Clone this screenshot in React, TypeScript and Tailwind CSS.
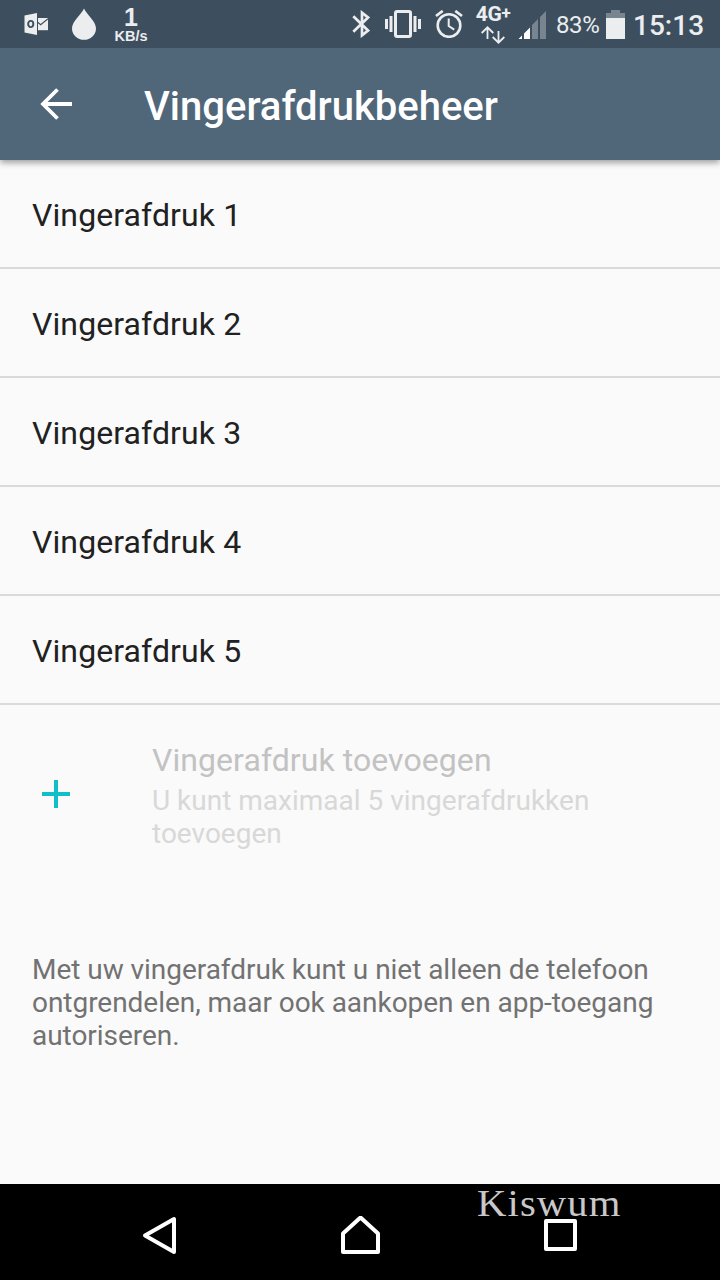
import { useState } from "react";

const vingerafdrukken = [
  "Vingerafdruk 1",
  "Vingerafdruk 2",
  "Vingerafdruk 3",
  "Vingerafdruk 4",
  "Vingerafdruk 5",
];

function OutlookIcon() {
  return (
    <svg className="w-6 h-[22px]" viewBox="0 0 24 22" fill="#ebedef">
      <path fillRule="evenodd" d="M0.5 2.5 13 0v22L0.5 19.5zM6.8 7C4.5 7 3.2 8.7 3.2 11s1.3 4 3.5 4 3.6-1.7 3.6-4.1S9 7 6.8 7zm0 1.8c1 0 1.5.8 1.5 2.2s-.5 2.2-1.5 2.2S5.200 12.400 5.200 11s.6-2.200 1.600-2.200z" />
      <path d="M14 5h10v12.200H14z" />
      <path d="M14 9.500l2.700 2.200L24 5.700" fill="none" stroke="#3d4f5e" strokeWidth="1.200" />
    </svg>
  );
}

function DropIcon() {
  return (
    <svg className="w-6 h-8" viewBox="0 0 24 32" fill="#ebedef">
      <path d="M12 0.500C9.500 6 0 13.500 0 20.200A12 11.600 0 0 0 24 20.200C24 13.500 14.500 6 12 0.500z" />
    </svg>
  );
}

function BluetoothIcon() {
  return (
    <svg className="w-[18px] h-7" viewBox="0 0 18 28" fill="none" stroke="#ebedef" strokeWidth="2.700">
      <path d="M1.300 6.200 16 20.500 10 25.300V2.700L16 7.500 1.300 21.800" />
    </svg>
  );
}

function VibrateIcon() {
  return (
    <svg className="w-9 h-7" viewBox="0 0 36 28" fill="#ebedef">
      <rect x="10.500" y="1.500" width="15" height="25" rx="1.500" fill="none" stroke="#ebedef" strokeWidth="3" />
      <path d="M0 9h3v10H0zM4.500 6h3v16h-3zM28.500 6h3v16h-3zM33 9h3v10h-3z" />
    </svg>
  );
}

function AlarmIcon() {
  return (
    <svg className="w-7 h-7" viewBox="0 0 28 28" fill="none" stroke="#ebedef">
      <circle cx="14" cy="15.500" r="11.300" strokeWidth="2.600" />
      <path d="M1 6 7.700 0.900M27 6 20.300 0.900" strokeWidth="2.700" />
      <path d="M13.700 8.500V16l5.500 3.700" strokeWidth="2" />
    </svg>
  );
}

function DataArrowsIcon() {
  return (
    <svg className="w-6 h-[18px]" viewBox="0 0 24 18" fill="none" stroke="#ebedef" strokeWidth="1.800">
      <path d="M6.500 13V1.500M0.700 7 6.500 1.300 12.300 7M17.500 5v11.500M11.700 11l5.800 5.700L23.300 11" />
    </svg>
  );
}

function SignalIcon() {
  return (
    <svg className="w-7 h-7" viewBox="0 0 28 28">
      <path d="M0.500 28 4 24.500V28zM6 22.500 12 16.500V28H6z" fill="#fff" />
      <path d="M14 14 20 8v20h-6zM22 6 28 0v28h-6z" fill="#788590" />
    </svg>
  );
}

function BatteryIcon() {
  return (
    <svg className="w-[19px] h-[29px]" viewBox="0 0 19 29">
      <path d="M0 3h5V0h9v3h5v5H0z" fill="#788590" />
      <path d="M0 8h19v21H0z" fill="#ebedef" />
    </svg>
  );
}

function StatusBar() {
  return (
    <div className="h-12 bg-[#3d4f5e] flex items-center text-[#ebedef] whitespace-nowrap">
      <div className="flex items-center pl-6 gap-6">
        <OutlookIcon />
        <DropIcon />
      </div>
      <div className="w-[34px] ml-[18px] h-12 pt-1 flex flex-col items-center font-['Liberation_Sans'] font-bold">
        <span className="text-[25px] leading-[26px]">1</span>
        <span className="text-[14.5px] leading-[12px]">KB/s</span>
      </div>
      <div className="ml-auto w-[368px] shrink-0 flex items-center">
        <BluetoothIcon />
        <div className="ml-[15px]"><VibrateIcon /></div>
        <div className="ml-3.5"><AlarmIcon /></div>
        <div className="w-[34px] ml-[13px] h-12 flex flex-col items-center">
          <span className="h-[26px] flex text-[21px] leading-[28px] font-bold tracking-[-0.3px]">
            4G<span className="text-[17px] leading-[27px]">+</span>
          </span>
          <DataArrowsIcon />
        </div>
        <div className="ml-2 mt-0.5"><SignalIcon /></div>
        <span className="ml-2.5 w-[43px] text-[24px] leading-[30px] mt-0.5 tracking-[-0.4px]">83%</span>
        <div className="ml-[7px]"><BatteryIcon /></div>
        <span className="ml-2 text-[28px] leading-8 font-medium mt-1">15:13</span>
      </div>
    </div>
  );
}

function NavBar() {
  return (
    <nav className="relative h-24 bg-black flex items-start pt-8 text-white">
      <button className="ml-[142px]" aria-label="Terug">
        <svg className="w-[36px] h-10" viewBox="0 0 36 40" fill="none" stroke="currentColor" strokeWidth="4" strokeLinejoin="round">
          <path d="M3 19.500 32 3v33z" />
        </svg>
      </button>
      <button className="ml-[162px]" aria-label="Startscherm">
        <svg className="w-10 h-10" viewBox="0 0 40 40" fill="none" stroke="currentColor" strokeWidth="4" strokeLinejoin="round">
          <path d="M3 36V17.500L20.500 1.500 38 17.500V36z" />
        </svg>
      </button>
      <button className="ml-[163px] pt-[3px]" aria-label="Overzicht">
        <svg className="w-[34px] h-[34px]" viewBox="0 0 34 34" fill="none" stroke="currentColor" strokeWidth="4" strokeLinejoin="round">
          <path d="M3 2h29v28H3z" />
        </svg>
      </button>
      <span className="absolute left-[477px] top-0 text-[37px] leading-10 tracking-[1px] origin-left scale-x-110 text-[#c8c8c8] font-['Liberation_Serif',serif]">
        Kiswum
      </span>
    </nav>
  );
}

export default function App() {
  const [lijst] = useState(vingerafdrukken);

  return (
    <div className="w-[720px] h-[1280px] overflow-hidden flex flex-col bg-[#fafafa] font-['Roboto',sans-serif]">
      <StatusBar />

      {/* HEADER */}
      <header className="relative h-28 shrink-0 bg-[#506679] flex items-center text-white shadow-[0_3px_6px_rgba(0,0,0,0.35)] [clip-path:inset(0_0_-12px_0)]">
        <button className="ml-10" aria-label="Terug">
          <svg className="w-8 h-8" viewBox="0 0 32 32" fill="none" stroke="currentColor" strokeWidth="3.800">
            <path d="M32 16H3M17.500 1.500 3 16l14.500 14.500" />
          </svg>
        </button>
        <h1 className="ml-[72px] mt-1.5 text-[40px] leading-[48px] font-medium">Vingerafdrukbeheer</h1>
      </header>

      {/* LIJST */}
      <ul className="shrink-0">
        {lijst.map((naam) => (
          <li key={naam} className="h-[109px] border-b-2 border-[#dadada] px-8 flex items-center text-[32px] tracking-[0.1px] text-[#212121]">
            <span className="mt-0.5">{naam}</span>
          </li>
        ))}
      </ul>

      <div className="flex shrink-0 pl-[42px] pt-9">
        <svg className="w-7 h-7 mt-[39px] shrink-0" viewBox="0 0 28 28" fill="#0fc0c9">
          <path d="M12 0h4v12h12v4H16v12h-4V16H0v-4h12z" />
        </svg>
        <div className="ml-[82px] w-[480px]">
          <p className="text-[32px] leading-[38px] tracking-[0.07px] text-[#c2c2c2]">Vingerafdruk toevoegen</p>
          <p className="mt-[5px] text-[28px] leading-[33px] text-[#d8d8d8]">
            U kunt maximaal 5 vingerafdrukken toevoegen
          </p>
        </div>
      </div>

      <p className="mt-[103px] px-8 text-[28px] leading-[33px] tracking-[-0.04px] text-[#727272]">
        Met uw vingerafdruk kunt u niet alleen de telefoon ontgrendelen, maar ook aankopen en app-toegang autoriseren.
      </p>

      <div className="mt-auto">
        <NavBar />
      </div>
    </div>
  );
}
